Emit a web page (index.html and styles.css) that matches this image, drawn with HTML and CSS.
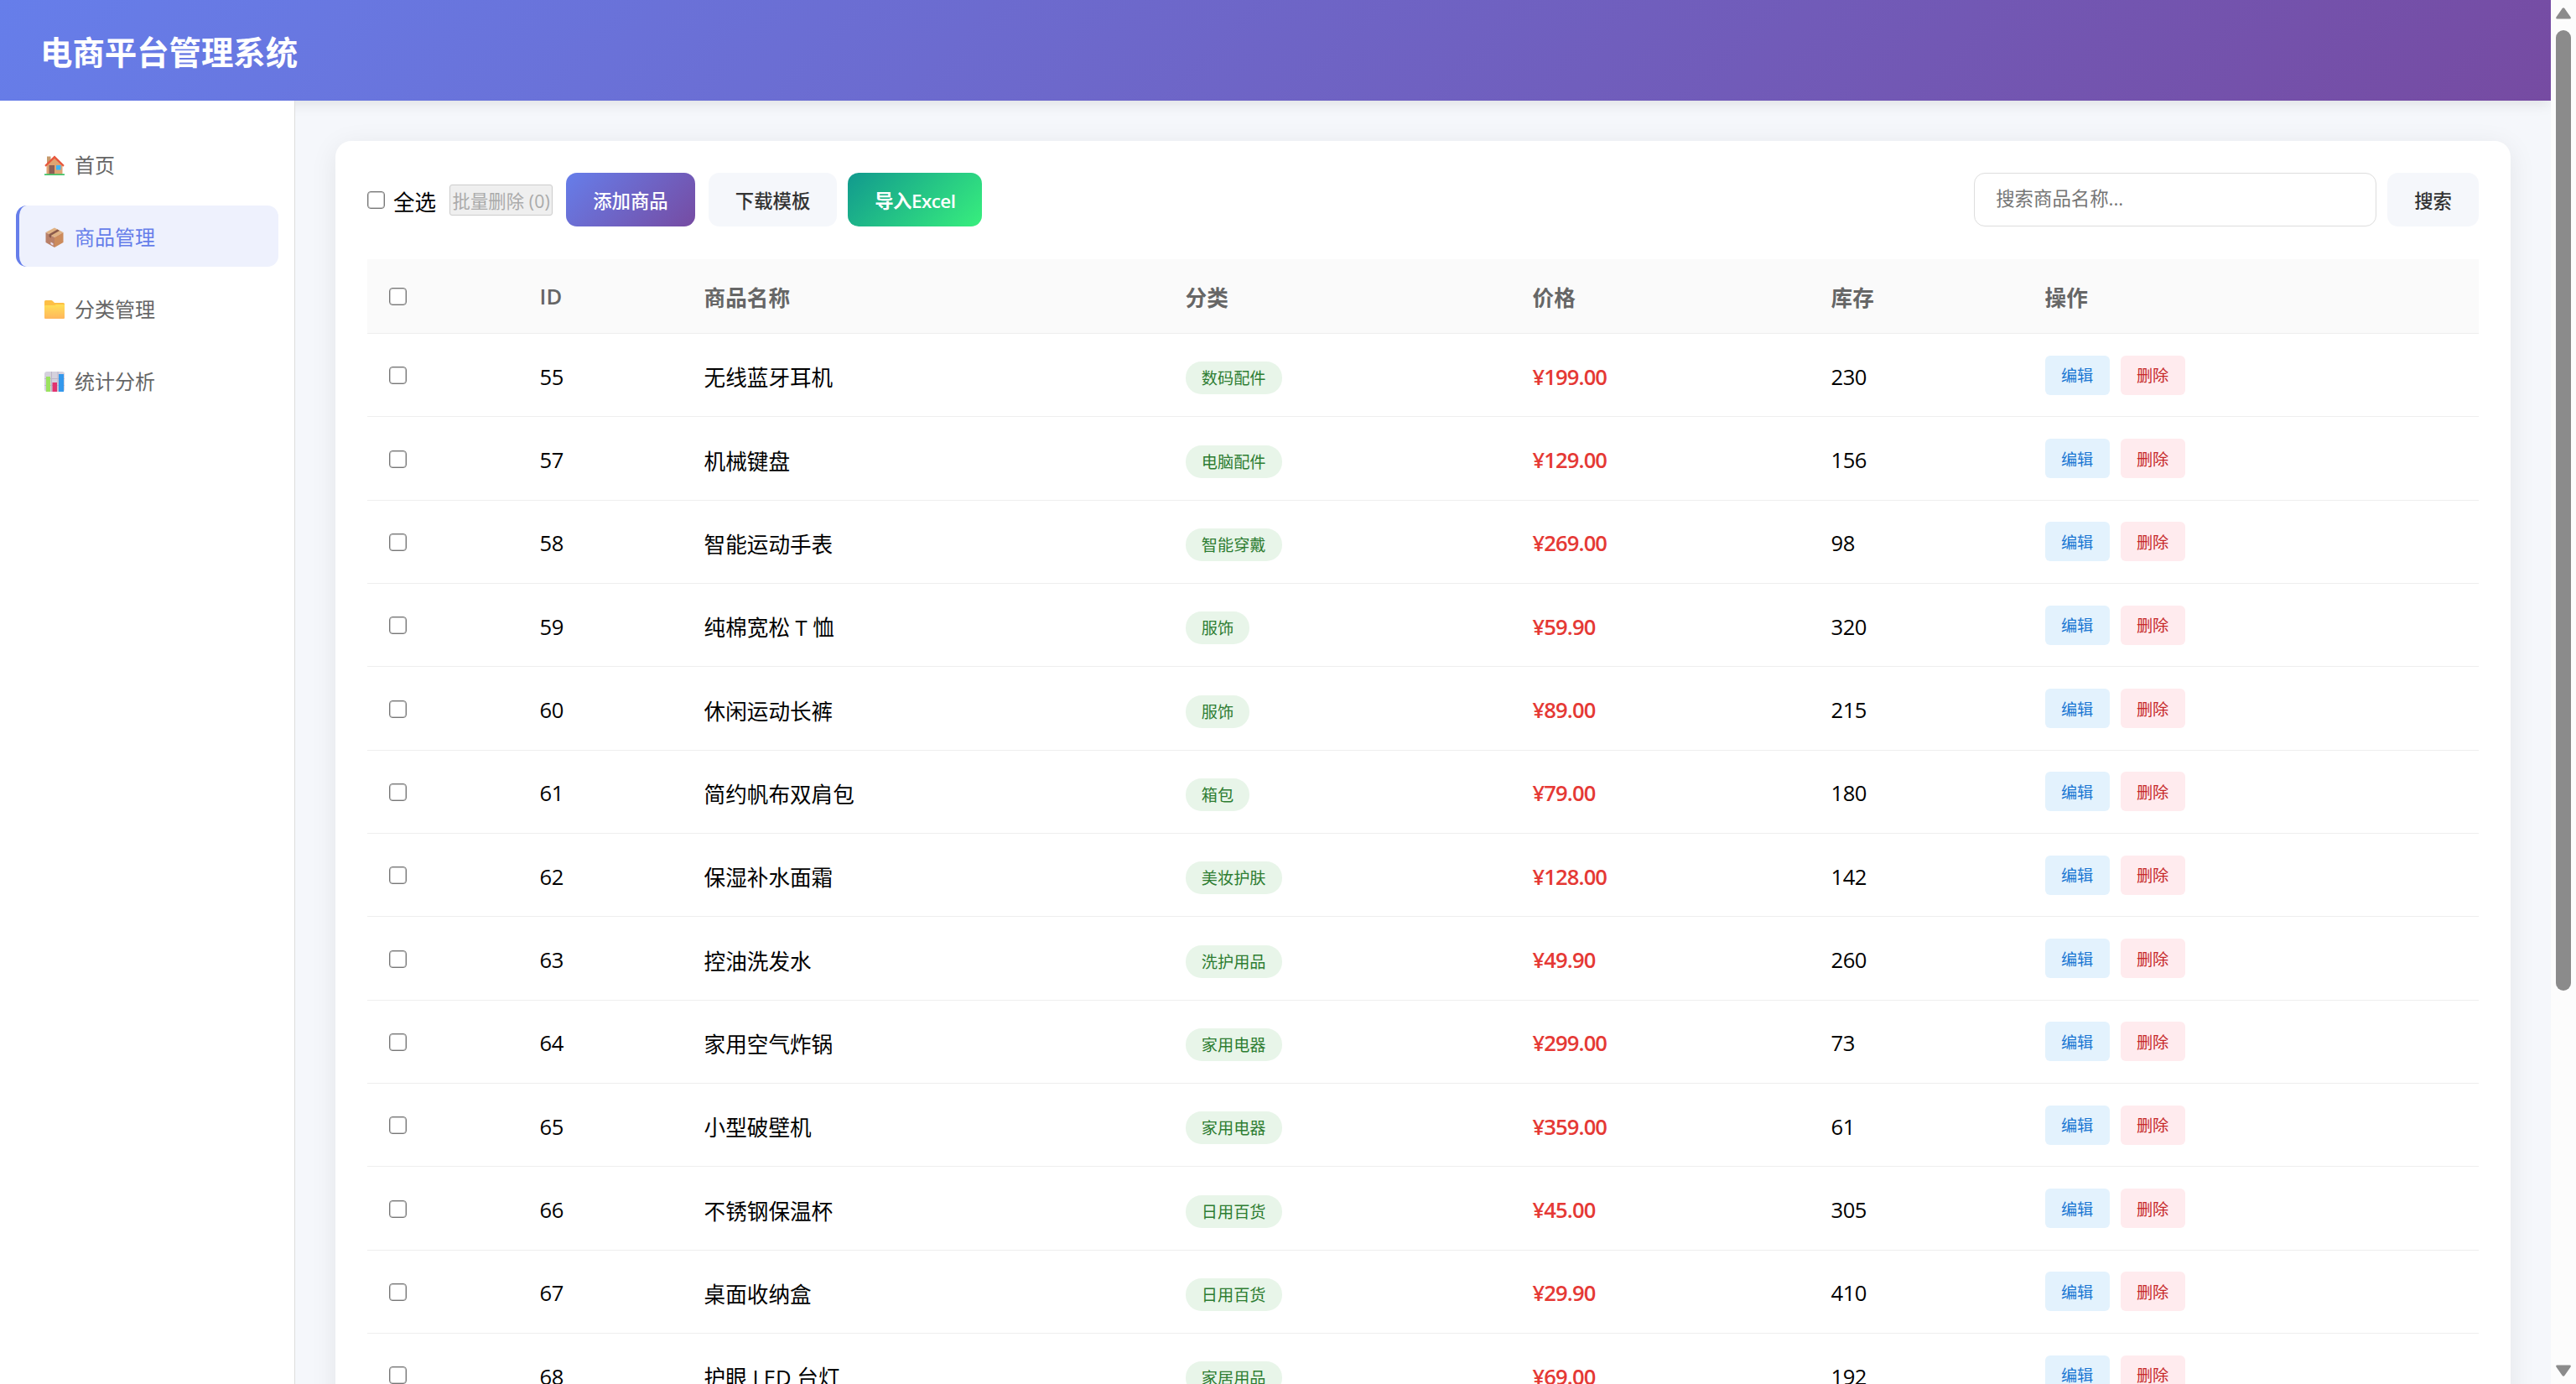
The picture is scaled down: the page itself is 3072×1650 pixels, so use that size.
FILE: index.html
```html
<!DOCTYPE html>
<html lang="zh-CN">
<head>
<meta charset="UTF-8">
<meta name="viewport" content="width=device-width, initial-scale=1.0">
<title>电商平台管理系统</title>
<link rel="stylesheet" href="styles.css">
</head>
<body>
<div class="page">
    <header class="header">
        <h1>电商平台管理系统</h1>
    </header>
    <div class="layout">
        <nav class="sidebar">
            <a class="nav-item">
                <svg class="nav-icon" viewBox="0 0 24 24">
                    <path fill="#c79a6c" d="M3 1.500h4.500v9H3z"/>
                    <path fill="#dfa472" d="M2.500 12 12 3l9.500 9v11h-19z"/>
                    <path fill="#e8573d" d="M12 .5.3 12l1.400 1.700L12 4l10.300 9.700 1.400-1.700z"/>
                    <path fill="#8d5f55" d="M5.500 12h6.500v10.500H5.500z"/>
                    <path fill="#3fb4f5" d="M14 12h5.500v5.500H14z"/>
                    <path fill="#3fc56b" d="M0 22.300h24V24H0z"/>
                </svg>
                <span>首页</span>
            </a>
            <a class="nav-item active">
                <svg class="nav-icon" viewBox="0 0 24 24">
                    <path fill="#e0b284" d="M12 .5 22.500 6 12 12 1.500 6z"/>
                    <path fill="#b98068" d="M1.500 6 12 12v12L1.500 18z"/>
                    <path fill="#cc8b5c" d="M22.500 6 12 12v12l10.500-6z"/>
                    <path fill="#8a5a4b" d="m5.500 8.300 10-5.700 2.500 1.300L8 9.700v3l-2.500-1.500z"/>
                    <path fill="#e9dff0" d="m7.500 17.500 3 1.700v2.500l-3-1.700z"/>
                </svg>
                <span>商品管理</span>
            </a>
            <a class="nav-item">
                <svg class="nav-icon" viewBox="0 0 24 24">
                    <defs>
                        <linearGradient id="folder" x1="0" y1="0" x2="0" y2="1">
                            <stop offset="0" stop-color="#ffdf55"/>
                            <stop offset="1" stop-color="#ffb65c"/>
                        </linearGradient>
                    </defs>
                    <path fill="#fdbf45" d="M0 2.500Q0 1 1.500 1H8q1 0 2 1l2 2h10.500Q24 4 24 5.500V12H0z"/>
                    <path fill="url(#folder)" d="M1 7h11l2-1h9q1 0 1 1v15q0 1-1 1H1q-1 0-1-1V8q0-1 1-1z"/>
                </svg>
                <span>分类管理</span>
            </a>
            <a class="nav-item">
                <svg class="nav-icon" viewBox="0 0 24 24">
                    <rect width="24" height="24" rx="3" fill="#d5d1dd"/>
                    <path stroke="#bcb5c8" d="M8.500 0v24M16 0v24M0 8.500h24M0 16.500h24"/>
                    <path fill="#9be25f" d="M2 6h5v18H2z"/>
                    <path fill="#e2336f" d="M9.500 13h5.500v11H9.500z"/>
                    <path fill="#3498ec" d="M17 3h6v21h-6z"/>
                </svg>
                <span>统计分析</span>
            </a>
        </nav>
        <main class="content">
            <div class="card">
                <div class="toolbar">
                    <div class="toolbar-left">
                        <label class="select-all"><input type="checkbox"> <span>全选</span></label>
                        <button class="batch-delete" disabled>批量删除 (0)</button>
                        <button class="btn btn-primary">添加商品</button>
                        <button class="btn btn-default">下载模板</button>
                        <button class="btn btn-import">导入Excel</button>
                    </div>
                    <div class="search-box">
                        <input type="text" placeholder="搜索商品名称...">
                        <button class="btn btn-default">搜索</button>
                    </div>
                </div>
                <table>
                    <thead>
                        <tr>
                            <th class="col-check"><input type="checkbox"></th>
                            <th class="col-id">ID</th>
                            <th class="col-name">商品名称</th>
                            <th class="col-category">分类</th>
                            <th class="col-price">价格</th>
                            <th class="col-stock">库存</th>
                            <th>操作</th>
                        </tr>
                    </thead>
                    <tbody id="productList"></tbody>
                </table>
            </div>
        </main>
    </div>
</div>
<div class="scrollbar">
    <svg class="arrow" viewBox="0 0 18 14"><path d="M7.500 1.200q1.500-1.700 3 0l7 10q1 2.300-1 2.300h-15q-2 0-1-2.300z"/></svg>
    <div class="thumb"></div>
    <svg class="arrow" viewBox="0 0 18 14"><path d="M7.500 12.800q1.500 1.700 3 0l7-10q1-2.300-1-2.300h-15q-2 0-1 2.300z"/></svg>
</div>
<script>
    var products = [
        [55, "无线蓝牙耳机", "数码配件", "199.00", 230],
        [57, "机械键盘", "电脑配件", "129.00", 156],
        [58, "智能运动手表", "智能穿戴", "269.00", 98],
        [59, "纯棉宽松 T 恤", "服饰", "59.90", 320],
        [60, "休闲运动长裤", "服饰", "89.00", 215],
        [61, "简约帆布双肩包", "箱包", "79.00", 180],
        [62, "保湿补水面霜", "美妆护肤", "128.00", 142],
        [63, "控油洗发水", "洗护用品", "49.90", 260],
        [64, "家用空气炸锅", "家用电器", "299.00", 73],
        [65, "小型破壁机", "家用电器", "359.00", 61],
        [66, "不锈钢保温杯", "日用百货", "45.00", 305],
        [67, "桌面收纳盒", "日用百货", "29.90", 410],
        [68, "护眼 LED 台灯", "家居用品", "69.00", 192]
    ];

    document.getElementById("productList").innerHTML = products.map(function(p) {
        return `<tr>
            <td class="check"><input type="checkbox"></td>
            <td class="text num">${p[0]}</td>
            <td class="text">${p[1]}</td>
            <td class="category"><span class="tag">${p[2]}</span></td>
            <td class="text price">¥${p[3]}</td>
            <td class="text num">${p[4]}</td>
            <td><div class="actions"><button class="edit">编辑</button><button class="delete">删除</button></div></td>
        </tr>`;
    }).join("");
</script>
</body>
</html>
```
FILE: styles.css
```css
* {
    margin: 0;
    padding: 0;
    box-sizing: border-box;
}
body {
    display: flex;
    height: 100vh;
    overflow: hidden;
    font-family: "Open Sans", "Noto Sans CJK SC", sans-serif;
    font-size: 25.6px;
    background: #f5f7fb;
    color: #000;
}
button,
input {
    font-family: inherit;
}
.page {
    flex: 1;
    display: flex;
    flex-direction: column;
}
.header {
    flex: none;
    height: 120px;
    padding: 4px 48px 0;
    display: flex;
    align-items: center;
    color: #fff;
    background: linear-gradient(135deg, #667eea 0%, #764ba2 100%);
    box-shadow: 0 3px 16px rgba(0, 0, 0, 0.1);
}
.header h1 {
    font-size: 38.4px;
    line-height: 56px;
    font-weight: 700;
}
.layout {
    flex: 1;
    display: flex;
    min-height: 0;
}
.sidebar {
    position: relative;
    width: 352px;
    flex: none;
    padding: 39px 19px 0;
    background: #fff;
    border-right: 1px solid #ddd;
}
.nav-item {
    display: flex;
    align-items: center;
    gap: 12px;
    height: 73px;
    margin-bottom: 13px;
    padding-left: 30px;
    border-left: 4px solid transparent;
    border-radius: 13px;
    font-size: 24px;
    color: #666;
}
.nav-item.active {
    color: #667eea;
    background: #eef1fd;
    border-left-color: #667eea;
}
.nav-icon {
    width: 24px;
    height: 24px;
    margin-top: 3px;
}
.content {
    flex: 1;
    padding: 48px;
}
.card {
    height: 100%;
    min-height: 1800px;
    padding: 38px;
    background: #fff;
    border-radius: 19px;
    box-shadow: 0 6px 32px rgba(0, 0, 0, 0.08);
}
.toolbar {
    display: flex;
    justify-content: space-between;
    height: 64px;
    margin-bottom: 39px;
}
.toolbar-left,
.search-box {
    display: flex;
    align-items: center;
}
input[type="checkbox"] {
    appearance: none;
    display: block;
    width: 21px;
    height: 21px;
    border: 1px solid #767676;
    border-radius: 4px;
    background: #fff;
    box-shadow: inset 0 0 0 1px #c8c8c8;
}
.select-all {
    display: flex;
    align-items: center;
    gap: 10px;
    margin-right: 16px;
}
.select-all span {
    padding-top: 3px;
}
.batch-delete {
    height: 37px;
    width: 123px;
    margin-right: 16px;
    padding-top: 1px;
    font-size: 21.3px;
    letter-spacing: 0.1px;
    white-space: nowrap;
    color: #aaa;
    background: #efefef;
    border: 1px solid #ccc;
    border-radius: 3px;
}
.btn {
    height: 64px;
    padding: 1px 32px 0;
    border: none;
    border-radius: 13px;
    font-size: 22.4px;
    font-weight: 500;
    white-space: nowrap;
}
.btn-primary {
    margin-right: 16px;
    color: #fff;
    background: linear-gradient(135deg, #667eea 0%, #764ba2 100%);
}
.btn-default {
    color: #333;
    background: #f5f7fb;
}
.btn-import {
    width: 160px;
    margin-left: 13px;
    padding: 1px 0 0;
    font-weight: 600;
    letter-spacing: -0.5px;
    color: #fff;
    background: linear-gradient(135deg, #11998e 0%, #38ef7d 100%);
}
.search-box input {
    width: 480px;
    height: 64px;
    margin-right: 13px;
    padding: 0 25px 3px;
    border: 1px solid #ddd;
    border-radius: 13px;
    font-size: 22.4px;
}
.search-box input::placeholder {
    color: #757575;
}
table {
    width: 100%;
    table-layout: fixed;
    border-collapse: separate;
    border-spacing: 0;
}
th,
td {
    padding: 0 25.6px;
    text-align: left;
    vertical-align: middle;
    border-bottom: 1px solid #eee;
}
th {
    height: 89px;
    padding-top: 1px;
    font-weight: 600;
    color: #666;
    background: #fafafa;
}
td {
    height: 99.35px;
}
.check {
    padding-top: 1px;
}
.text {
    padding-top: 4px;
}
.category {
    padding-top: 7px;
}
.num {
    letter-spacing: -0.6px;
}
.col-check {
    width: 180px;
}
.col-id {
    width: 196px;
}
.col-name {
    width: 574px;
}
.col-category {
    width: 414px;
}
.col-price {
    width: 356px;
}
.col-stock {
    width: 255px;
}
.tag {
    display: inline-block;
    height: 39px;
    padding: 0 19.2px;
    border-radius: 19px;
    font-size: 19.2px;
    line-height: 39px;
    color: #2e7d32;
    background: #e8f5e9;
}
.price {
    font-weight: 600;
    letter-spacing: -0.9px;
    color: #e53935;
}
.actions {
    display: flex;
    gap: 13px;
}
.actions button {
    width: 77px;
    height: 47px;
    border: none;
    border-radius: 6px;
    font-size: 19.2px;
}
.edit {
    color: #1976d2;
    background: #e3f2fd;
}
.delete {
    color: #c62828;
    background: #ffebee;
}
.scrollbar {
    width: 30px;
    flex: none;
    display: flex;
    flex-direction: column;
    align-items: center;
    padding: 9px 0;
    background: #fcfcfc;
}
.thumb {
    width: 18px;
    height: 1145px;
    margin: 13px 0 auto;
    border-radius: 9px;
    background: #8b8b8b;
}
.arrow {
    width: 18px;
    height: 14px;
    fill: #8b8b8b;
}
```
